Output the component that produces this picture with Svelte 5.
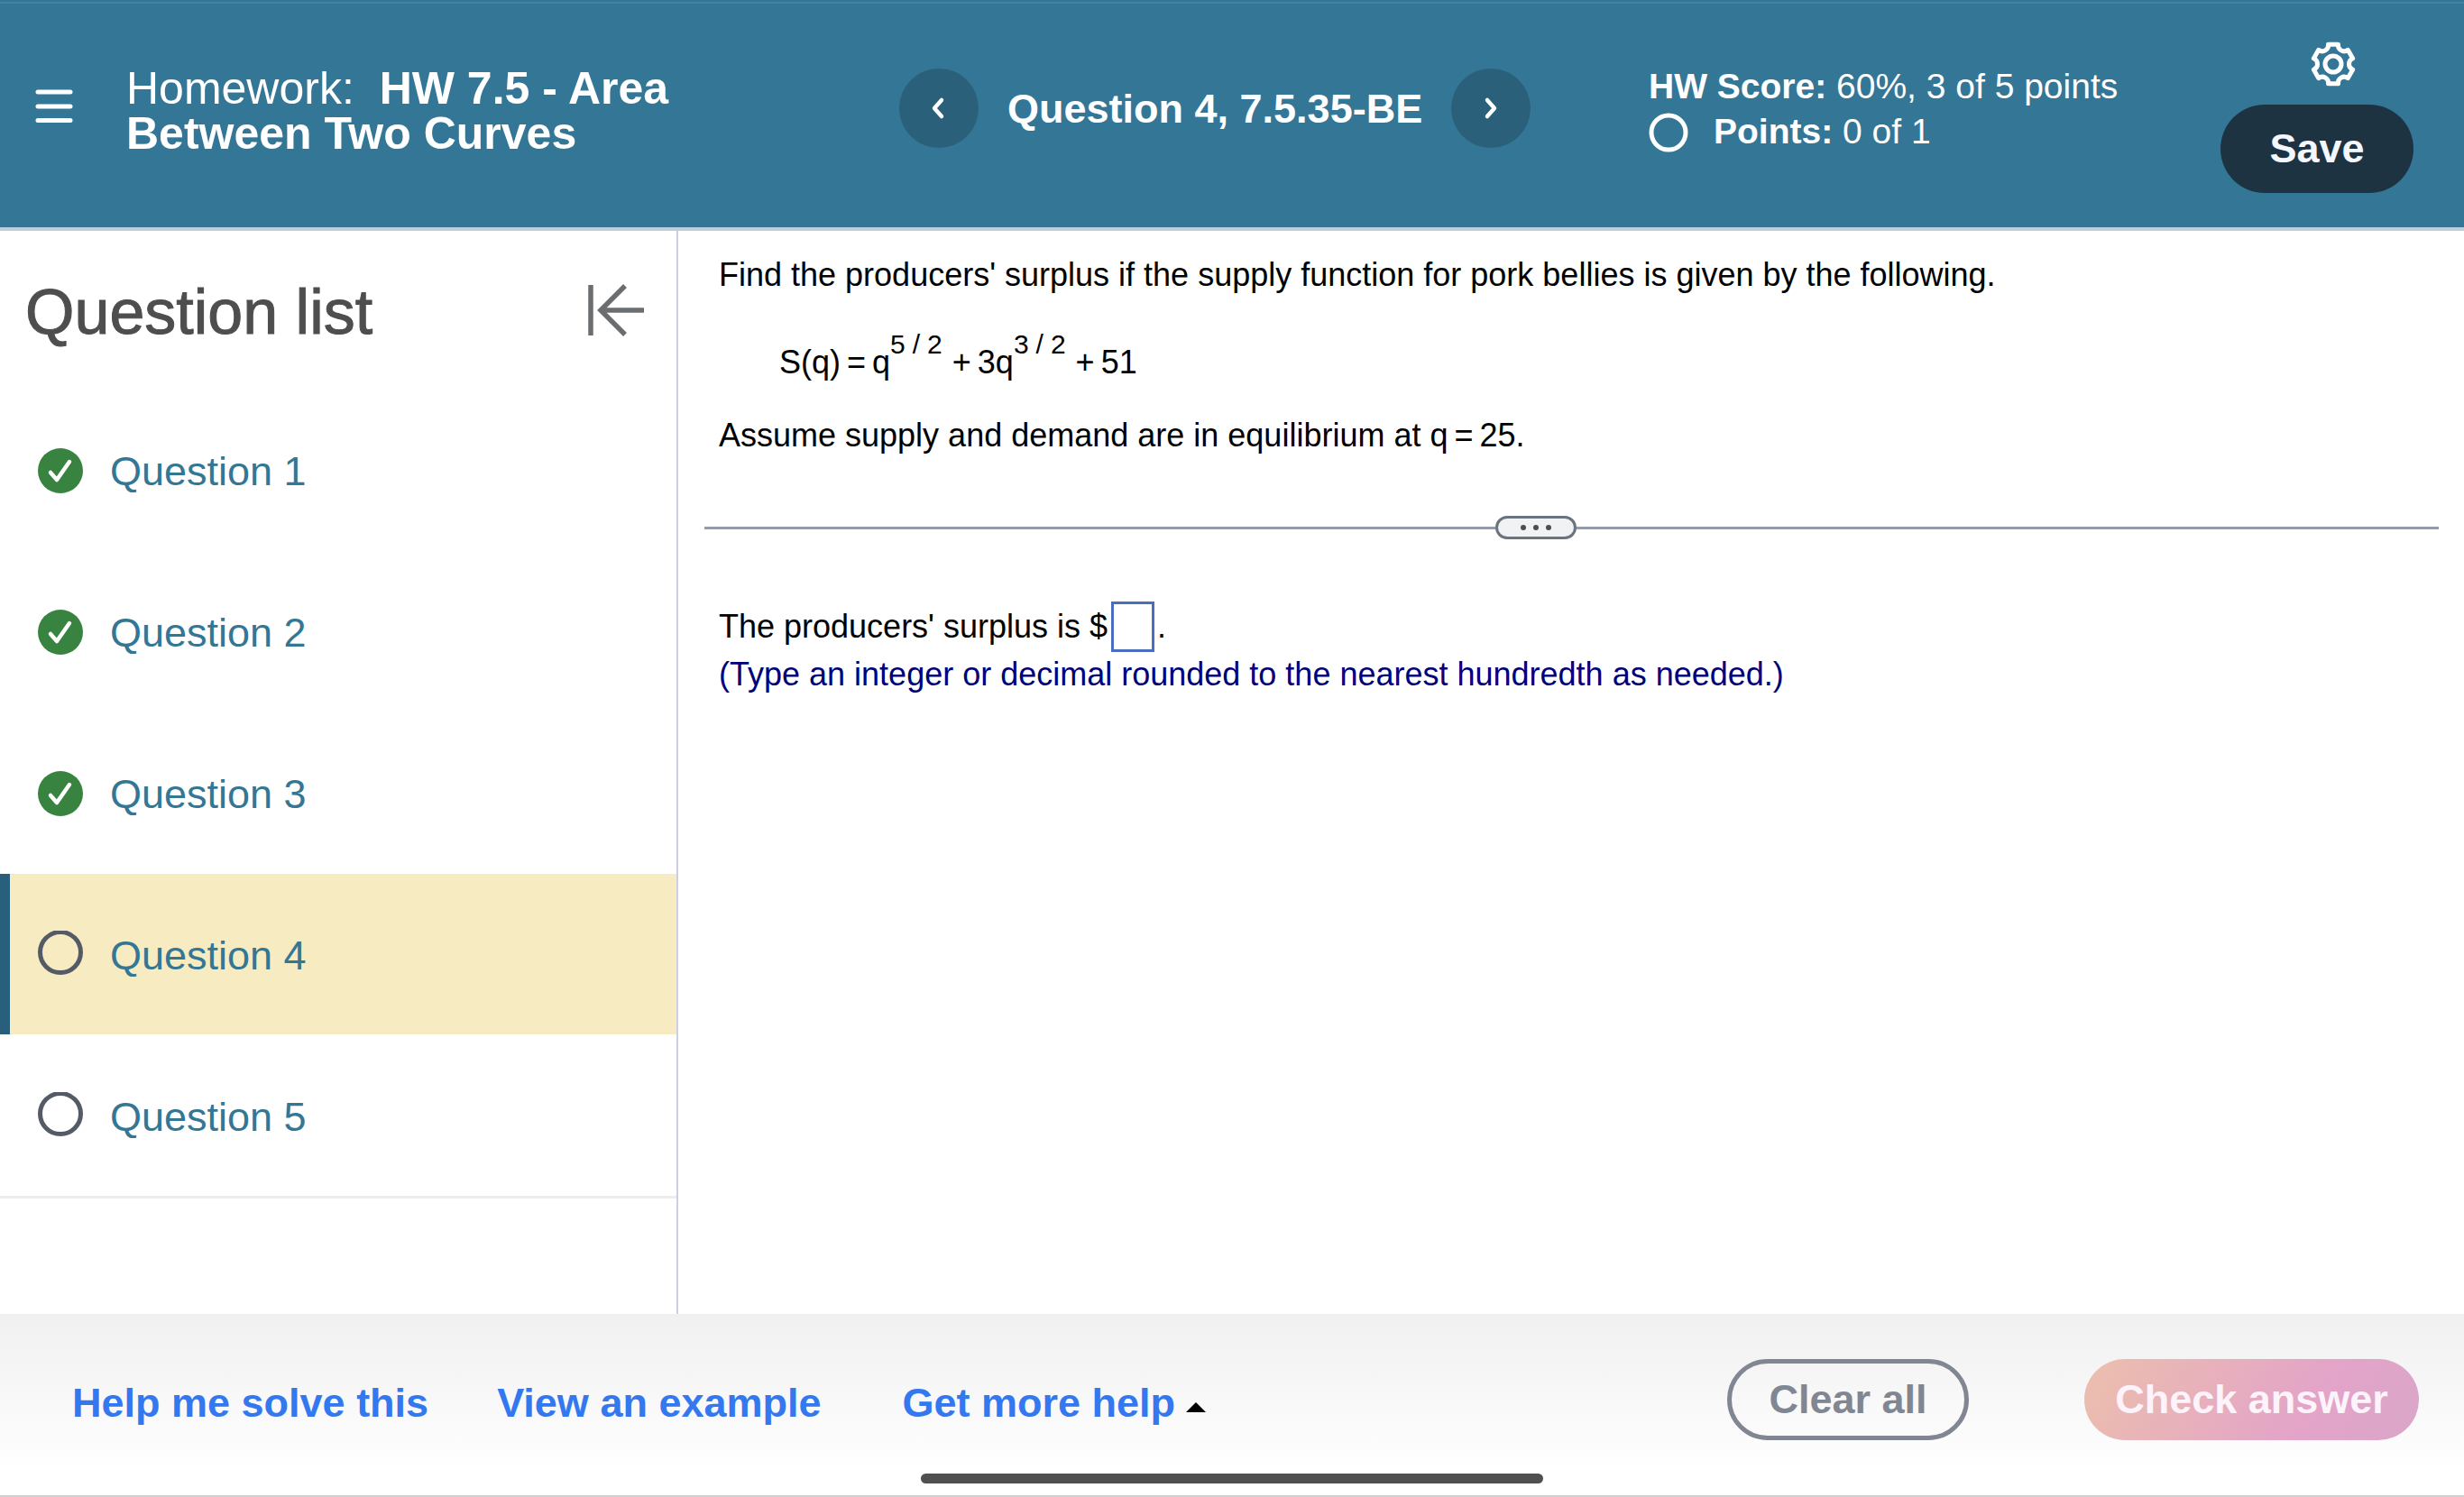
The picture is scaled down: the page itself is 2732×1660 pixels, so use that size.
<script>
  const questions = [
    { name: 'Question 1', state: 'done' },
    { name: 'Question 2', state: 'done' },
    { name: 'Question 3', state: 'done' },
    { name: 'Question 4', state: 'open', current: true },
    { name: 'Question 5', state: 'open' }
  ];
  let answer = $state('');

  // Six-toothed gear centred on (26, 26)
  function gearPath() {
    const at = (r, deg) => {
      const a = (deg * Math.PI) / 180;
      return `${(26 + r * Math.cos(a)).toFixed(2)} ${(26 + r * Math.sin(a)).toFixed(2)}`;
    };
    let d = '';
    for (let k = 0; k < 6; k++) {
      const axis = -90 + 60 * k;
      d += `${k ? 'L' : 'M'}${at(22.5, axis - 14)}L${at(22.5, axis + 14)}`;
      d += `C${at(16.5, axis + 17)} ${at(16.5, axis + 43)} ${at(22.5, axis + 46)}`;
    }
    return d + 'Z';
  }
  const gear = gearPath();
</script>

<div class="page">
  <header>
    <button class="icon-btn menu" aria-label="Menu">
      <svg width="44" height="40" viewBox="0 0 44 40"><path d="M4 4H40M4 20H40M4 35.500H40" stroke="#fff" stroke-width="5" stroke-linecap="round" /></svg>
    </button>
    <h1><span class="light">Homework:&nbsp;</span> HW 7.5 - Area Between Two Curves</h1>
    <nav class="pager" aria-label="Question">
      <button class="round" aria-label="Previous question">
        <svg width="20" height="26" viewBox="0 0 20 26"><path d="M13 4L5 13L13 22" fill="none" stroke="#fff" stroke-width="4.500" stroke-linecap="round" stroke-linejoin="round" /></svg>
      </button>
      <h2>Question 4, 7.5.35-BE</h2>
      <button class="round" aria-label="Next question">
        <svg width="20" height="26" viewBox="0 0 20 26"><path d="M6 4L14 13L6 22" fill="none" stroke="#fff" stroke-width="4.500" stroke-linecap="round" stroke-linejoin="round" /></svg>
      </button>
    </nav>
    <div class="scores">
      <div><b>HW Score:</b> 60%, 3 of 5 points</div>
      <div class="points">
        <svg width="44" height="48" viewBox="0 0 44 48"><circle cx="22" cy="25" r="19" fill="none" stroke="#fff" stroke-width="5" /></svg>
        <span><b>Points:</b> 0 of 1</span>
      </div>
    </div>
    <div class="actions">
      <button class="icon-btn gear" aria-label="Settings">
        <svg width="52" height="52" viewBox="0 0 52 52" fill="none" stroke="#fff" stroke-width="5" stroke-linejoin="round"><circle cx="26" cy="26" r="9" /><path d={gear} /></svg>
      </button>
      <button class="save">Save</button>
    </div>
  </header>

  <div class="body">
    <aside>
      <div class="aside-head">
        <h2>Question list</h2>
        <button class="icon-btn" aria-label="Collapse list">
          <svg width="62" height="60" viewBox="0 0 62 60" fill="none" stroke="#6b6e70" stroke-width="5.500"><path d="M3 2V58M62 30H14M41 3L14 30L41 57" /></svg>
        </button>
      </div>
      <ul>
        {#each questions as q}
          <li class:current={q.current}>
            <a href="#top" aria-current={q.current ? 'true' : undefined}>
              {#if q.state === 'done'}
                <svg width="50" height="52" viewBox="0 0 50 52"><circle cx="25" cy="27" r="25" fill="#37833f" /><path d="M14 29L21 37L35 17" fill="none" stroke="#fff" stroke-width="4.500" stroke-linecap="round" stroke-linejoin="round" /></svg>
              {:else}
                <svg width="50" height="52" viewBox="0 0 50 52"><circle cx="25" cy="24" r="22.500" fill="none" stroke="#555b66" stroke-width="5" /></svg>
              {/if}
              <span>{q.name}</span>
            </a>
          </li>
        {/each}
      </ul>
    </aside>

    <main>
      <section class="problem">
        <p>Find the producers' surplus if the supply function for pork bellies is given by the following.</p>
        <p class="formula">S(q)<i class="op">=</i>q<sup>5<i>/</i>2</sup><i class="op">+</i>3q<sup>3<i>/</i>2</sup><i class="op">+</i>51</p>
        <p>Assume supply and demand are in equilibrium at q<i class="op">=</i>25.</p>
      </section>
      <div class="divider">
        <button aria-label="More"><svg width="40" height="8" viewBox="0 0 40 8" fill="#4a4f55"><circle cx="6" cy="4" r="3" /><circle cx="20" cy="4" r="3" /><circle cx="34" cy="4" r="3" /></svg></button>
      </div>
      <section class="answer">
        <p class="entry"><label for="surplus">The producers' surplus is $</label><input id="surplus" type="text" bind:value={answer} /><span>.</span></p>
        <p class="hint">(Type an integer or decimal rounded to the nearest hundredth as needed.)</p>
      </section>
    </main>
  </div>

  <footer>
    <div class="help">
      <a href="#top">Help me solve this</a>
      <a href="#top">View an example</a>
      <button class="more">Get more help <svg width="22" height="19" viewBox="0 0 22 19"><path d="M0 19L11 8L22 19Z" fill="#000" /></svg></button>
    </div>
    <div class="submit">
      <button class="clear">Clear all</button>
      <button class="check">Check answer</button>
    </div>
    <div class="handle"></div>
  </footer>
</div>

<style>
  :global(body) { margin: 0; }
  .page { min-height: 100vh; box-sizing: border-box; display: flex; flex-direction: column; background: #fff; color: #000; font-family: "Liberation Sans", Arial, sans-serif; }
  h1, h2, p, ul { margin: 0; padding: 0; }
  button { font-family: inherit; cursor: pointer; border: 0; padding: 0; }
  svg { display: block; flex: none; }
  a { text-decoration: none; }
  i { font-style: normal; }
  .icon-btn { background: none; }

  header { box-sizing: border-box; min-height: 256px; display: grid; grid-template-columns: 140px 857px 700px 1fr auto; align-items: start; background: linear-gradient(#347696 2px, #4384a2 2px 4px, #347696 4px); border-bottom: 4px solid #bccfdd; color: #fff; padding-right: 56px; }
  .menu { margin: 98px 0 0 38px; justify-self: start; }
  h1 { font-size: 50px; line-height: 50px; padding-top: 73px; max-width: 640px; }
  .light { font-weight: 400; }
  .pager { display: flex; align-items: center; gap: 32px; padding-top: 76px; }
  .pager h2 { font-size: 45px; line-height: 52px; padding-top: 2px; white-space: nowrap; }
  .round { width: 88px; height: 88px; flex: none; border-radius: 50%; background: #2a607a; display: grid; place-items: center; }
  .scores { padding: 71px 0 0 131px; font-size: 39px; line-height: 50px; white-space: nowrap; }
  .points { display: flex; align-items: center; gap: 28px; }
  .actions { display: flex; flex-direction: column; align-items: center; padding-top: 45px; }
  .gear { margin-left: 36px; }
  .save { margin-top: 19px; width: 214px; height: 98px; border-radius: 49px; background: #1d3342; color: #f5f7ff; font-size: 45px; font-weight: 700; }

  .body { flex: 1; display: grid; grid-template-columns: 752px 1fr; }
  aside { box-sizing: border-box; border-right: 2px solid #cccfdf; }
  .aside-head { box-sizing: border-box; display: flex; justify-content: space-between; align-items: center; padding: 0 36px 0 28px; height: 176px; }
  .aside-head h2 { font-size: 70px; font-weight: 400; line-height: 80px; padding-top: 4px; color: #4e4e4e; -webkit-text-stroke: 1px #4e4e4e; }
  ul { list-style: none; border-bottom: 3px solid #ededef; }
  li { border-left: 11px solid transparent; margin-bottom: 1px; }
  li:last-child { margin-bottom: 0; }
  li.current { background: #f6ebc1; border-color: #275f7c; }
  li a { display: flex; align-items: center; gap: 30px; height: 178px; padding-left: 31px; font-size: 45px; color: #337795; }
  li span { padding-top: 4px; }

  main { padding: 28px 28px 0 29px; }
  .problem, .answer { padding-left: 16px; font-size: 36px; line-height: 42px; }
  .formula { padding-left: 67px; margin: 55px 0 39px; }
  .op { margin: 0 7px; }
  sup { font-size: 30px; line-height: 0; vertical-align: 22px; margin-right: 4px; }
  sup i { margin: 0 8px; }
  .divider { display: flex; align-items: center; margin: 68px 0 69px; }
  .divider::before, .divider::after { content: ""; height: 3px; background: #959bab; }
  .divider::before { flex: 11; }
  .divider::after { flex: 12; }
  .divider button { width: 90px; height: 26px; box-sizing: border-box; border: 3px solid #6a7380; border-radius: 13px; background: #f0f2f4; display: grid; place-items: center; }
  .entry { display: flex; align-items: center; margin-bottom: 4px; }
  input { box-sizing: border-box; width: 48px; height: 56px; border: 3px solid #4a6dc0; border-radius: 0; margin: 0 3px 0 4px; padding: 0 4px; font: inherit; }
  .hint { color: #000078; }

  footer { position: relative; box-sizing: border-box; min-height: 203px; display: flex; justify-content: space-between; align-items: flex-start; background: linear-gradient(#f0f0f0, #fff 88%); border-bottom: 2px solid #cfcfd1; padding: 50px 50px 0 80px; font-size: 45px; line-height: 52px; font-weight: 700; }
  .help { display: flex; gap: 76px; padding-top: 23px; }
  .help a, .more { color: #3478ef; }
  .more { background: none; font: inherit; display: flex; align-items: center; gap: 12px; margin-left: 14px; }
  .submit { display: flex; gap: 128px; }
  .submit button { font: inherit; height: 90px; border-radius: 45px; }
  .clear { width: 268px; box-sizing: border-box; border: 5px solid #808692; color: #808692; background: none; }
  .check { width: 371px; color: #fcf4fa; background: linear-gradient(120deg, #ebbcb0 8%, #e3a4c8 66%, #d9a6c9); }
  .submit .clear { border: 5px solid #808692; }
  .handle { position: absolute; left: 50%; bottom: 13px; width: 690px; height: 11px; margin-left: -345px; border-radius: 6px; background: #505050; }
</style>
